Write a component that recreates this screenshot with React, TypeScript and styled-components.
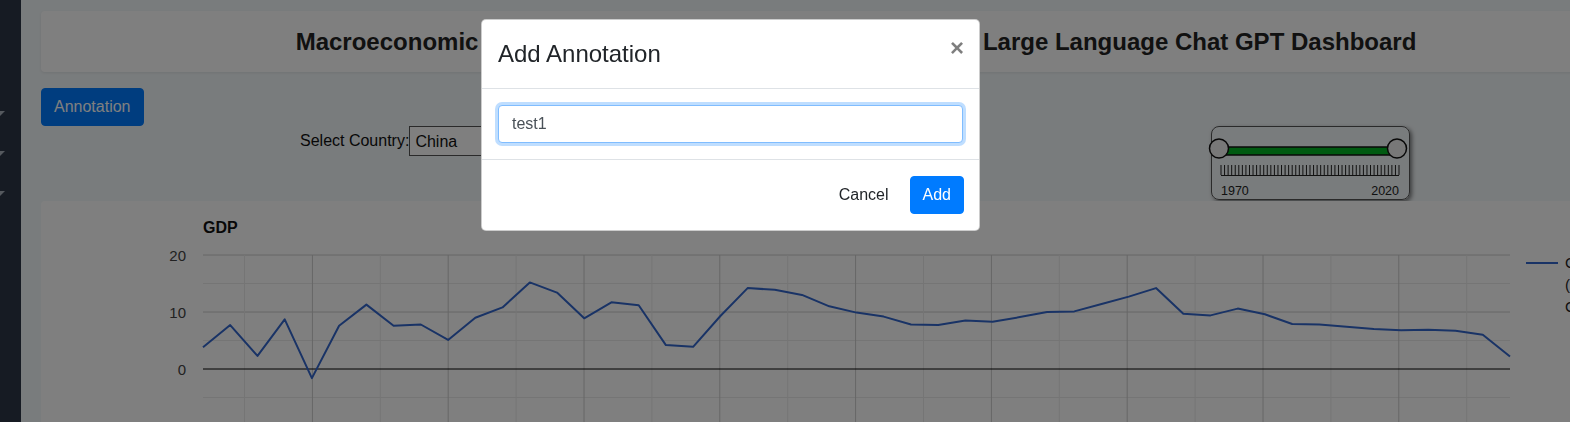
import React from "react";
import styled, { createGlobalStyle } from "styled-components";

const GlobalStyle = createGlobalStyle`
  html, body {
    margin: 0;
    padding: 0;
  }
  body {
    font-family: "Liberation Sans", Arial, Helvetica, sans-serif;
    background: #f3f8fa;
    color: #212529;
    overflow: hidden;
  }
  * {
    box-sizing: border-box;
  }
`;

// China GDP growth (annual %), 1972 - 2020
const gdp = [
  3.8, 7.7, 2.3, 8.7, -1.6, 7.6, 11.3, 7.6, 7.8, 5.1, 9.0, 10.8, 15.2, 13.4,
  8.9, 11.7, 11.2, 4.2, 3.9, 9.3, 14.2, 13.9, 13.0, 11.0, 9.9, 9.2, 7.8, 7.7,
  8.5, 8.3, 9.1, 10.0, 10.1, 11.4, 12.7, 14.2, 9.7, 9.4, 10.6, 9.6, 7.9, 7.8,
  7.4, 7.0, 6.8, 6.9, 6.7, 6.0, 2.2
];

const PLOT_LEFT = 203;
const PLOT_RIGHT = 1510;
const ZERO_Y = 369;
const UNIT = 5.7;

const px = (k: number) =>
  PLOT_LEFT + (k * (PLOT_RIGHT - PLOT_LEFT)) / (gdp.length - 1);
const py = (v: number) => ZERO_Y - v * UNIT;

const Page = styled.div`
  display: flex;
  width: 1691px;
  min-height: 100vh;
`;

const Sidebar = styled.aside`
  width: 21px;
  flex-shrink: 0;
  background: #2c3646;
  padding-top: 111px;
  overflow: hidden;
  display: flex;
  flex-direction: column;
`;

const SidebarItem = styled.div`
  height: 40px;
`;

const Caret = styled.span`
  display: block;
  width: 0;
  height: 0;
  margin-left: -5px;
  border-left: 5px solid transparent;
  border-right: 5px solid transparent;
  border-top: 5px solid #aab2bd;
`;

const Main = styled.main`
  flex: 1;
  padding: 11px 20px 0 20px;
  display: flex;
  flex-direction: column;
`;

const TitlePanel = styled.header`
  height: 61px;
  background: #ffffff;
  border-radius: 4px;
  box-shadow: 0 1px 3px rgba(0, 0, 0, 0.08);
  display: flex;
  align-items: center;
  justify-content: center;
`;

const Title = styled.h1`
  margin: 0;
  font-size: 24px;
  font-weight: 700;
  color: #222;
`;

const ToolbarRow = styled.div`
  margin-top: 16px;
  display: flex;
`;

const PrimaryButton = styled.button`
  font-family: inherit;
  font-size: 16px;
  line-height: 1.5;
  padding: 6px 12px;
  border: 1px solid #007bff;
  border-radius: 4px;
  background: #007bff;
  color: #ffffff;
  cursor: pointer;
`;

const ControlsRow = styled.div`
  height: 74px;
  display: flex;
  align-items: flex-start;
  padding-left: 259px;
`;

const CountryGroup = styled.label`
  height: 30px;
  display: flex;
  align-items: center;
  font-size: 16px;
  color: #111;
`;

const CountrySelect = styled.select`
  width: 160px;
  height: 30px;
  font-family: inherit;
  font-size: 16px;
  color: #111;
  background: #ffffff;
  border: 1px solid #555;
  border-radius: 0;
  padding: 0 1px;
`;

const SliderBox = styled.div`
  margin-left: 642px;
  width: 199px;
  height: 74px;
  border: 1px solid #555;
  border-radius: 8px;
  box-shadow: 2px 2px 4px rgba(0, 0, 0, 0.5);
  svg {
    display: block;
    overflow: visible;
  }
`;

const ChartPanel = styled.section`
  margin-top: 1px;
  flex: 1;
  min-height: 240px;
  background: #ffffff;
  border-radius: 4px;
  svg {
    display: block;
  }
`;

const Backdrop = styled.div`
  position: fixed;
  inset: 0;
  background: rgba(0, 0, 0, 0.5);
`;

const ModalDialog = styled.div`
  position: fixed;
  top: 19px;
  left: 481px;
  width: 499px;
  background: #ffffff;
  border: 1px solid rgba(0, 0, 0, 0.2);
  border-radius: 5px;
  display: flex;
  flex-direction: column;
`;

const ModalHeader = styled.div`
  display: flex;
  align-items: flex-start;
  justify-content: space-between;
  padding: 16px;
  border-bottom: 1px solid #dee2e6;
`;

const ModalTitle = styled.h5`
  margin: 0;
  font-size: 24px;
  font-weight: 400;
  line-height: 1.5;
  color: #212529;
`;

const CloseButton = styled.button`
  margin: -16px -16px -16px auto;
  padding: 16px 15px 16px 16px;
  background: transparent;
  border: 0;
  font-family: inherit;
  font-size: 24px;
  font-weight: 700;
  line-height: 1;
  color: #000;
  opacity: 0.5;
  text-shadow: 0 1px 0 #fff;
  cursor: pointer;
`;

const ModalBody = styled.div`
  padding: 16px;
`;

const TextInput = styled.input`
  display: block;
  width: 100%;
  height: 38px;
  padding: 6px 13px;
  font-family: inherit;
  font-size: 16px;
  color: #495057;
  background: #ffffff;
  border: 1px solid #80bdff;
  border-radius: 4px;
  box-shadow: 0 0 0 3px rgba(0, 123, 255, 0.25);
  outline: none;
`;

const ModalFooter = styled.div`
  display: flex;
  align-items: center;
  justify-content: flex-end;
  padding: 12px 11px 12px 12px;
  border-top: 1px solid #dee2e6;
  button {
    margin: 4px;
  }
`;

const TextButton = styled.button`
  font-family: inherit;
  font-size: 16px;
  line-height: 1.5;
  padding: 6px 12px;
  border: 1px solid transparent;
  border-radius: 4px;
  background: transparent;
  color: #212529;
  cursor: pointer;
`;

const RangeSlider: React.FC = () => {
  const ticks = Array.from({ length: 51 }, (_, i) => 9 + (i * 178) / 50);
  const font = "Liberation Sans, Arial, sans-serif";
  return (
    <svg width={197} height={72}>
      {ticks.map((x, i) => (
        <line key={i} x1={x} x2={x} y1={38} y2={48} stroke="#222" strokeWidth={1} />
      ))}
      <line x1={9} x2={187} y1={48.5} y2={48.5} stroke="#222" strokeWidth={1} />
      <rect x={7} y={20} width={178} height={8} fill="#00b422" stroke="#111" strokeWidth={1.5} />
      <circle cx={7} cy={21.5} r={9.5} fill="#f0f0f0" stroke="#111" strokeWidth={1.5} />
      <circle cx={185} cy={21.5} r={9.5} fill="#f0f0f0" stroke="#111" strokeWidth={1.5} />
      <text x={9} y={68} fontSize={12.5} fill="#222" fontFamily={font}>
        1970
      </text>
      <text x={187} y={68} fontSize={12.5} fill="#222" textAnchor="end" fontFamily={font}>
        2020
      </text>
    </svg>
  );
};

const GdpChart: React.FC = () => {
  const hLines = [20, 15, 10, 5, -5, -10];
  const vLines = Array.from({ length: 19 }, (_, j) => 244.5 + j * 67.9);
  const points = gdp.map((v, k) => `${px(k).toFixed(1)},${py(v).toFixed(1)}`).join(" ");
  const font = "Liberation Sans, Arial, sans-serif";
  return (
    <svg width={1630} height={240} viewBox="41 201 1630 240">
      <text x={203} y={233} fontSize={16} fontWeight={700} fill="#111" fontFamily={font}>
        GDP
      </text>
      {hLines.map((v) => (
        <line
          key={v}
          x1={PLOT_LEFT}
          x2={PLOT_RIGHT}
          y1={py(v)}
          y2={py(v)}
          stroke={v % 10 === 0 ? "#cccccc" : "#ebebeb"}
          strokeWidth={1}
        />
      ))}
      {vLines.map((x, j) => (
        <line
          key={j}
          x1={x}
          x2={x}
          y1={py(20)}
          y2={460}
          stroke={j % 2 === 1 ? "#cccccc" : "#ebebeb"}
          strokeWidth={1}
        />
      ))}
      <line x1={PLOT_LEFT} x2={PLOT_RIGHT} y1={ZERO_Y} y2={ZERO_Y} stroke="#000" strokeWidth={1} />
      {[20, 10, 0, -10].map((v) => (
        <text key={v} x={186} y={py(v) + 5.5} fontSize={15} fill="#444" textAnchor="end" fontFamily={font}>
          {v}
        </text>
      ))}
      <polyline points={points} fill="none" stroke="#3366cc" strokeWidth={2} strokeLinejoin="round" />
      <line x1={1526} x2={1558} y1={263} y2={263} stroke="#3366cc" strokeWidth={2} />
      <text x={1565} y={268} fontSize={15} fill="#222" fontFamily={font}>
        GDP growth
      </text>
      <text x={1565} y={290} fontSize={15} fill="#222" fontFamily={font}>
        (annual %)
      </text>
      <text x={1565} y={312} fontSize={15} fill="#222" fontFamily={font}>
        China
      </text>
    </svg>
  );
};

const App: React.FC = () => {
  return (
    <>
      <GlobalStyle />
      <Page>
        <Sidebar>
          {[0, 1, 2].map((i) => (
            <SidebarItem key={i}>
              <Caret />
            </SidebarItem>
          ))}
        </Sidebar>
        <Main>
          <TitlePanel>
            <Title>
              Macroeconomic and Food Security Analysis Integrated with Large Language Chat GPT Dashboard
            </Title>
          </TitlePanel>
          <ToolbarRow>
            <PrimaryButton>Annotation</PrimaryButton>
          </ToolbarRow>
          <ControlsRow>
            <CountryGroup>
              Select Country:
              <CountrySelect defaultValue="China">
                <option>China</option>
                <option>India</option>
                <option>United States</option>
              </CountrySelect>
            </CountryGroup>
            <SliderBox>
              <RangeSlider />
            </SliderBox>
          </ControlsRow>
          <ChartPanel>
            <GdpChart />
          </ChartPanel>
        </Main>
      </Page>
      <Backdrop />
      <ModalDialog role="dialog">
        <ModalHeader>
          <ModalTitle>Add Annotation</ModalTitle>
          <CloseButton aria-label="Close">×</CloseButton>
        </ModalHeader>
        <ModalBody>
          <TextInput defaultValue="test1" />
        </ModalBody>
        <ModalFooter>
          <TextButton>Cancel</TextButton>
          <PrimaryButton>Add</PrimaryButton>
        </ModalFooter>
      </ModalDialog>
    </>
  );
};

export default App;
